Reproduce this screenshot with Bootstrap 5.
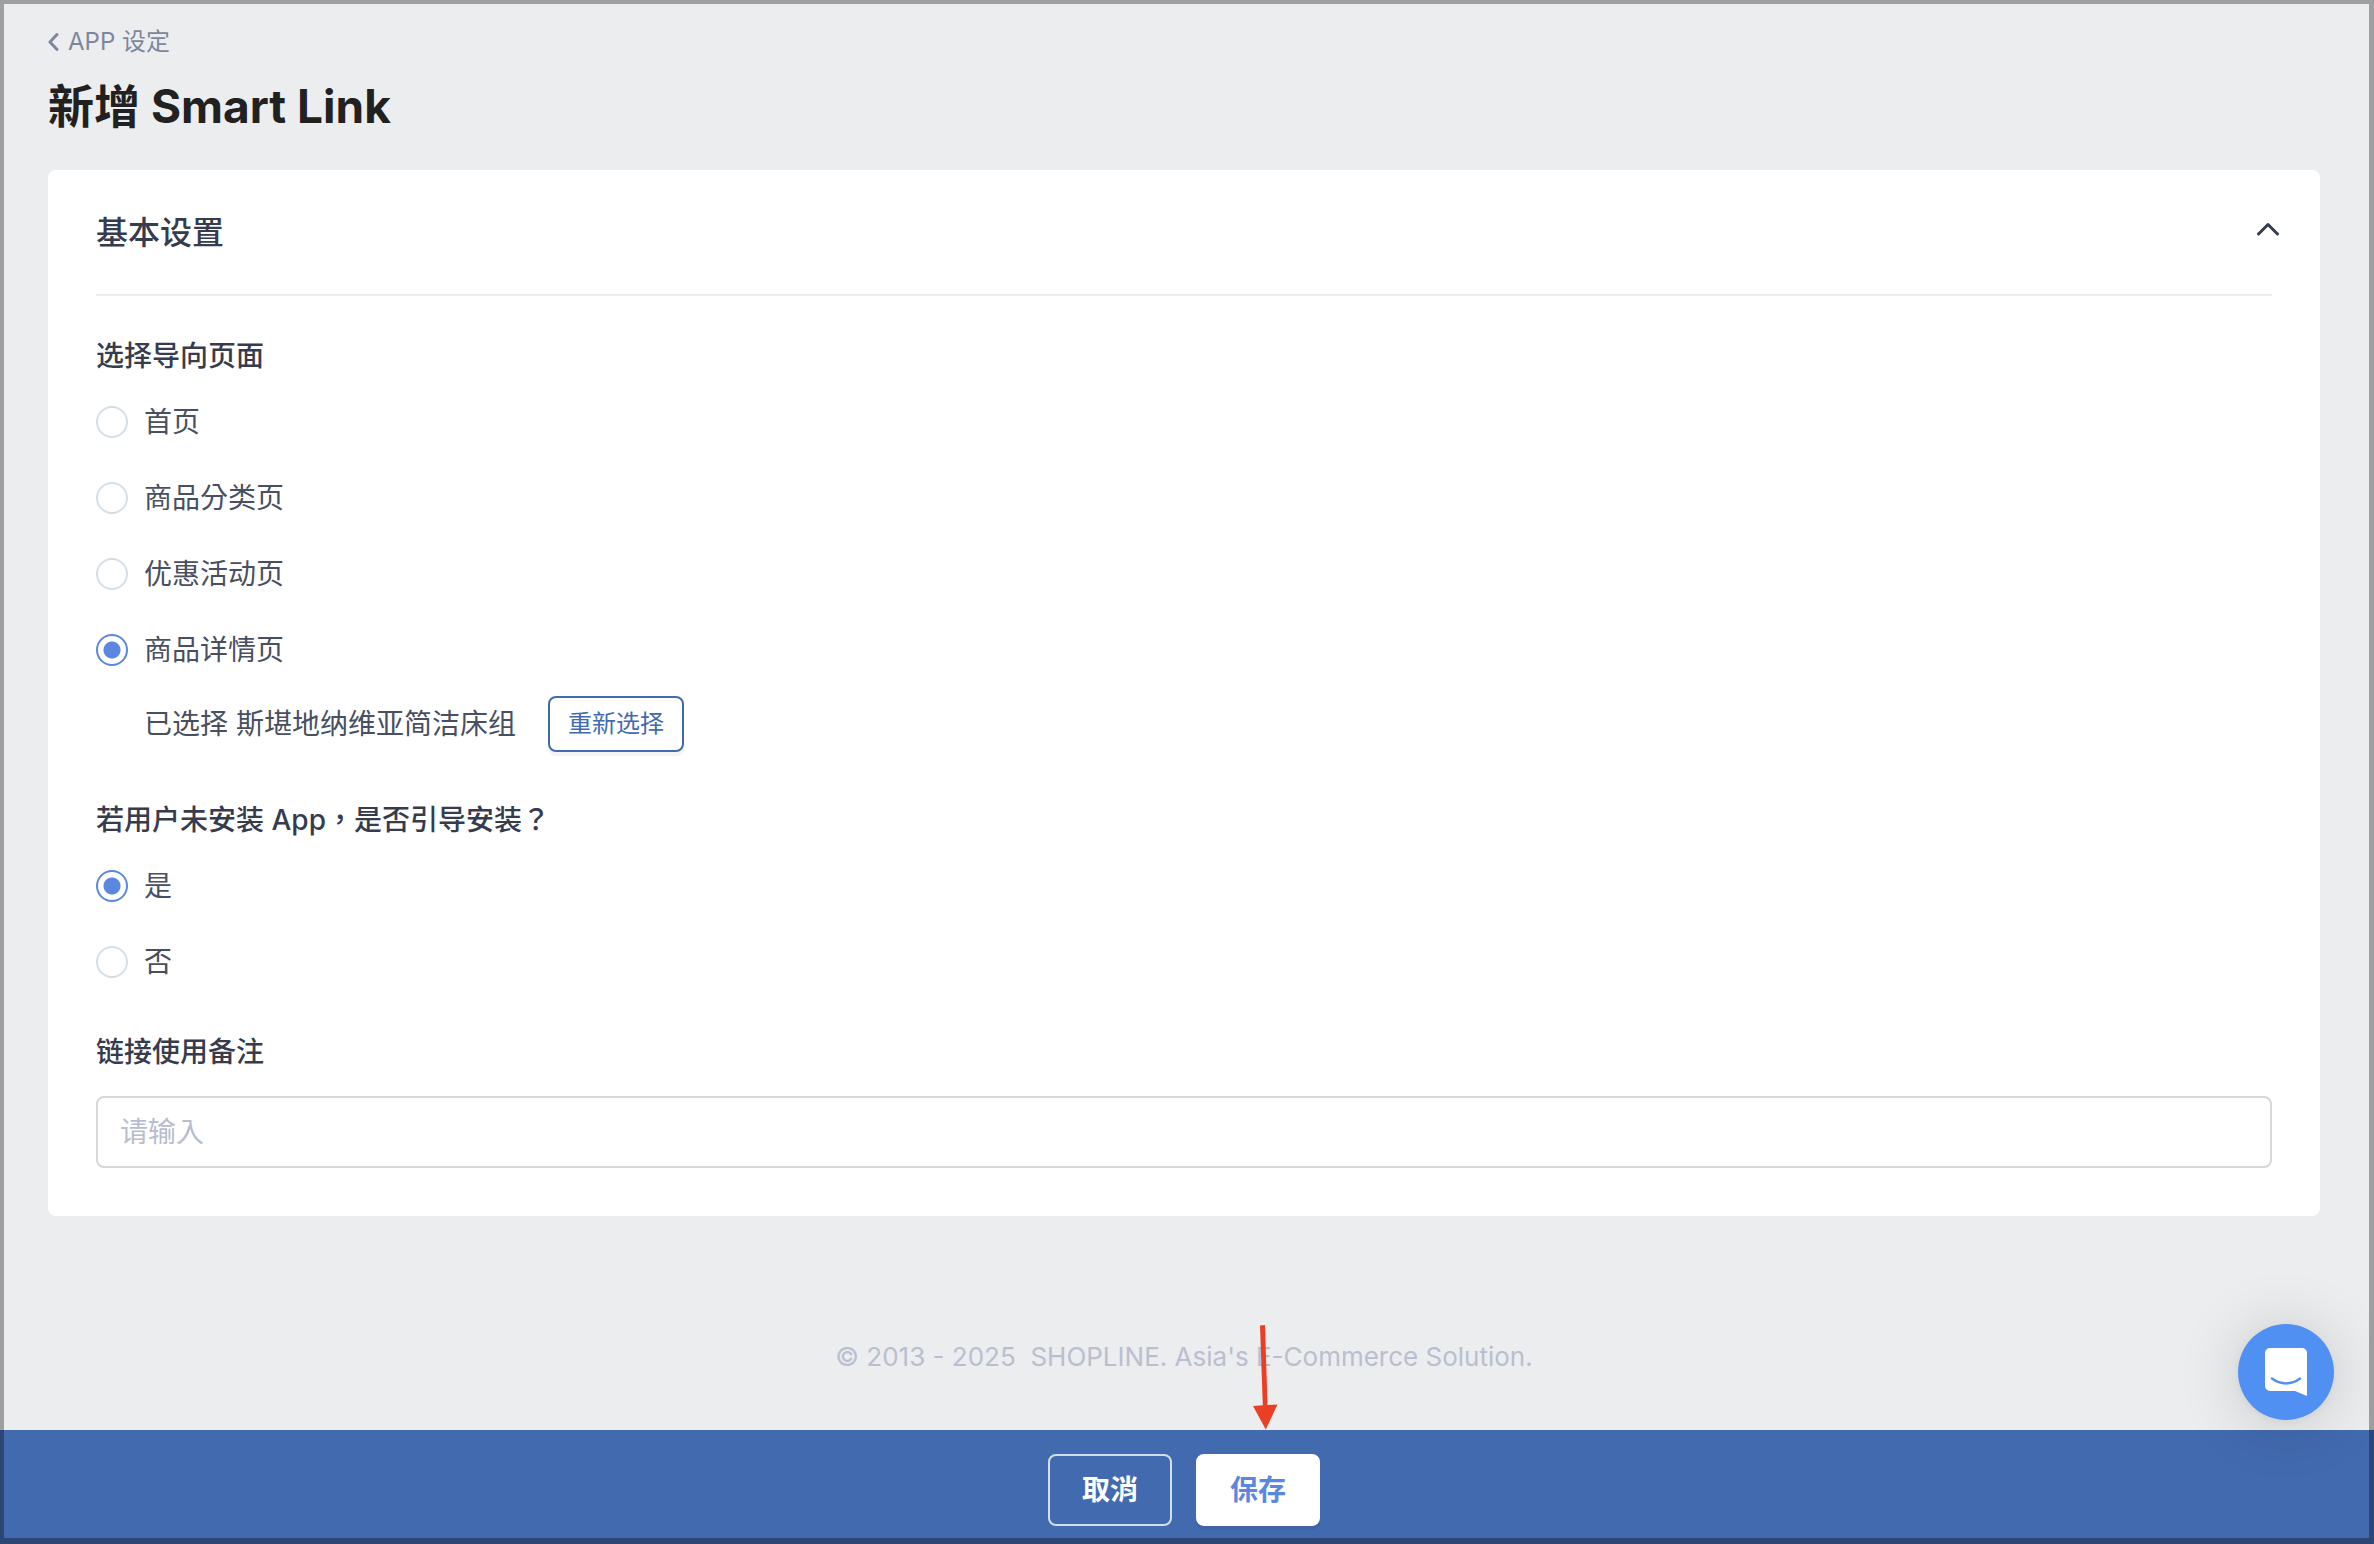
<!DOCTYPE html>
<html lang="zh-Hant">
<head>
<meta charset="utf-8">
<meta name="viewport" content="width=device-width, initial-scale=1">
<title>新增 Smart Link</title>
<link href="https://cdn.jsdelivr.net/npm/bootstrap@5.3.0/dist/css/bootstrap.min.css" rel="stylesheet">
<style>
  body { background: #ecedef; color: #484f60; font-family: Inter, "Noto Sans CJK TC", sans-serif; font-size: 28px; line-height: 40px; }
  .page-area { padding: 24px 54px 0 48px; }
  .back-link { color: #7c879d; font-size: 24px; line-height: 36px; gap: 8px; }
  .page-title { color: #212121; font-size: 46px; font-weight: 700; line-height: 64px; margin: 10px 0 32px; }
  .panel { border: 0; border-radius: 8px; padding: 0 48px 48px; }
  .panel-top { height: 126px; border-bottom: 2px solid #ececee; }
  .panel-top h2 { color: #363c4d; font-size: 32px; font-weight: 500; line-height: 44px; margin: 0; padding-top: 2px; }
  .toggle-btn { margin-right: -16px; padding: 8px; }
  .section-label { color: #363c4d; font-size: 28px; font-weight: 500; line-height: 40px; margin: 0 0 30px; padding: 0; float: none; }
  .group-target { margin-top: 40px; }
  .choice { height: 32px; gap: 16px; }
  .choices { gap: 44px; }
  .choice .form-check-input { width: 32px; height: 32px; margin: 0; float: none; border: 2px solid #d5dee6; background-color: #fff; box-shadow: none; }
  .choice .form-check-input:checked { border-color: #5c87e0; background-image: radial-gradient(circle, #5c87e0 7px, #5c87e0 8px, transparent 9px); }
  .picked { padding-left: 48px; margin-top: 30px; gap: 32px; }
  .btn-pick { --bs-btn-color: #416ab1; --bs-btn-border-color: #416ab1; --bs-btn-hover-bg: #416ab1; --bs-btn-hover-color: #fff; background: #fff; border-width: 2px; border-radius: 8px; font-size: 24px; line-height: 36px; padding: 8px 18px; box-shadow: 0 4px 0 #f4f4f5; }
  .note-group { padding-top: 6px; }
  .note-input { border: 2px solid #d8d8d9; border-radius: 8px; font-size: 28px; line-height: 40px; padding: 14px 22px; }
  .note-input::placeholder { color: #b7bdcd; }
  .copyright { color: #b9bfce; font-size: 26px; padding: 0 54px 0 48px; margin-bottom: 53px; }
  .action-bar { background: #426aaf; padding: 24px 6px 18px 0; gap: 24px; }
  .btn-act { width: 124px; height: 72px; border-radius: 8px; border-width: 2px; font-size: 28px; font-weight: 600; line-height: 40px; padding: 0; }
  .btn-cancel, .btn-cancel:hover { color: #fff; border-color: #d3dfe8; }
  .btn-save, .btn-save:hover { color: #5c87e0; background: #fff; border-color: #fff; box-shadow: 0 4px 0 #3f64a7; }
  .pointer { bottom: 96px; left: 56px; }
  .chat-btn { width: 96px; height: 96px; right: 40px; bottom: 124px; background: #5090f3; box-shadow: 0 2px 12px rgba(0,0,0,.06), 0 4px 64px rgba(0,0,0,.16); z-index: 5; }
  .edge-frame { border: solid rgba(0,0,0,.33); border-width: 4px 5px 6px 4px; z-index: 10; }
</style>
<script src="https://cdn.jsdelivr.net/npm/bootstrap@5.3.0/dist/js/bootstrap.bundle.min.js"></script>
</head>
<body class="d-flex flex-column min-vh-100">
<main class="page-area">
  <a href="#" class="back-link d-inline-flex align-items-center text-decoration-none align-top">
    <svg width="12" height="20" viewBox="0 0 12 20" fill="none" stroke="currentColor" stroke-width="3" stroke-linecap="round" stroke-linejoin="round" aria-hidden="true"><path d="M9 2.500 2 10l7 7.500"/></svg>
    APP 设定
  </a>
  <h1 class="page-title">新增 Smart Link</h1>

  <form id="linkForm" class="card panel">
    <div class="panel-top d-flex align-items-center justify-content-between">
      <h2>基本设置</h2>
      <button type="button" class="btn border-0 toggle-btn d-flex" aria-label="收起">
        <svg width="24" height="24" viewBox="0 0 24 24" fill="none" stroke="#363c4d" stroke-width="3" stroke-linecap="round" stroke-linejoin="round"><path d="m2.500 14 9.500-9.500 9.500 9.500"/></svg>
      </button>
    </div>

    <fieldset class="group-target">
      <legend class="section-label">选择导向页面</legend>
      <div class="choices d-flex flex-column">
        <div class="choice d-flex align-items-center"><input class="form-check-input" type="radio" name="target" id="t1"><label for="t1">首页</label></div>
        <div class="choice d-flex align-items-center"><input class="form-check-input" type="radio" name="target" id="t2"><label for="t2">商品分类页</label></div>
        <div class="choice d-flex align-items-center"><input class="form-check-input" type="radio" name="target" id="t3"><label for="t3">优惠活动页</label></div>
        <div class="choice d-flex align-items-center"><input class="form-check-input" type="radio" name="target" id="t4" checked><label for="t4">商品详情页</label></div>
      </div>
      <div class="picked d-flex align-items-center">
        <span>已选择 斯堪地纳维亚简洁床组</span>
        <button type="button" class="btn btn-pick">重新选择</button>
      </div>
    </fieldset>

    <fieldset class="mt-5">
      <legend class="section-label">若用户未安装 App，是否引导安装？</legend>
      <div class="choices d-flex flex-column">
        <div class="choice d-flex align-items-center"><input class="form-check-input" type="radio" name="guide" id="g1" checked><label for="g1">是</label></div>
        <div class="choice d-flex align-items-center"><input class="form-check-input" type="radio" name="guide" id="g2"><label for="g2">否</label></div>
      </div>
    </fieldset>

    <div class="note-group d-flex flex-column gap-4 mt-5">
      <label for="note" class="section-label mb-0">链接使用备注</label>
      <input id="note" type="text" class="form-control note-input" placeholder="请输入">
    </div>
  </form>
</main>

<footer class="mt-auto">
  <p class="copyright text-center">© 2013 - 2025 &nbsp;SHOPLINE. Asia's E-Commerce Solution.</p>
  <div class="action-bar d-flex justify-content-center">
    <button type="button" class="btn btn-act btn-cancel">取消</button>
    <div class="position-relative">
      <button type="submit" form="linkForm" class="btn btn-act btn-save">保存</button>
      <svg class="pointer position-absolute" width="26" height="106" viewBox="0 0 26 106" fill="#eb3f25" aria-hidden="true"><path d="M8 1.500l5-.5 2.500 80 10-.5L13.800 105.500 1 82l9.800-.8z"/></svg>
    </div>
  </div>
</footer>

<button type="button" class="btn border-0 rounded-circle p-0 position-fixed d-flex align-items-center justify-content-center chat-btn" aria-label="Chat">
  <svg width="42" height="48" viewBox="0 0 42 48"><path fill="#fff" d="M5 0h32a5 5 0 0 1 5 5v43l-12-5H5a5 5 0 0 1-5-5V5a5 5 0 0 1 5-5z"/><path d="M7 30.500c8.500 6.500 19.500 6.500 28 0" fill="none" stroke="#5090f3" stroke-width="2.500" stroke-linecap="round"/></svg>
</button>
<div class="edge-frame position-fixed top-0 bottom-0 start-0 end-0 pe-none"></div>
</body>
</html>
